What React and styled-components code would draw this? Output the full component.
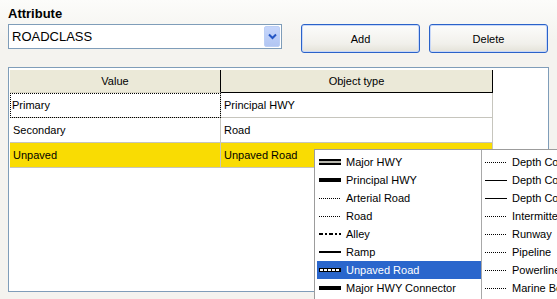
import styled, { createGlobalStyle } from "styled-components";

const GlobalStyle = createGlobalStyle`
  html, body {
    margin: 0;
    padding: 0;
    overflow: hidden;
    background: #f4f3ef;
  }
  * {
    box-sizing: border-box;
  }
`;

const rows = [
  { value: "Primary", type: "Principal HWY", focused: true },
  { value: "Secondary", type: "Road" },
  { value: "Unpaved", type: "Unpaved Road", selected: true },
];

const leftItems = [
  { label: "Major HWY", symbol: "double" },
  { label: "Principal HWY", symbol: "thick" },
  { label: "Arterial Road", symbol: "dotted" },
  { label: "Road", symbol: "dotted" },
  { label: "Alley", symbol: "dashdot" },
  { label: "Ramp", symbol: "solid2" },
  { label: "Unpaved Road", symbol: "unpaved", active: true },
  { label: "Major HWY Connector", symbol: "thick" },
];

const rightItems = [
  { label: "Depth Contour", symbol: "dotted" },
  { label: "Depth Contour 2", symbol: "solid1" },
  { label: "Depth Contour 3", symbol: "solid1" },
  { label: "Intermittent Stream", symbol: "dotted" },
  { label: "Runway", symbol: "dotted" },
  { label: "Pipeline", symbol: "dotted" },
  { label: "Powerline", symbol: "dotted" },
  { label: "Marine Boundary", symbol: "dotted" },
];

function LineSymbol({ kind, light }) {
  const ink = light ? "#ffffff" : "#000000";
  return (
    <svg width="22" height="6" viewBox="0 0 22 6">
      {kind === "double" && (
        <>
          <rect x="0" y="0" width="22" height="6" fill="#000" />
          <rect x="0" y="2" width="22" height="2" fill="#b8b7ae" />
        </>
      )}
      {kind === "thick" && <rect x="0" y="1" width="22" height="4" fill="#000" />}
      {kind === "dotted" && (
        <line x1="0" y1="3.5" x2="22" y2="3.5" stroke={ink} strokeWidth="1" strokeDasharray="1 1" />
      )}
      {kind === "solid1" && <rect x="0" y="3" width="22" height="1" fill={ink} />}
      {kind === "solid2" && <rect x="0" y="2" width="22" height="2" fill={ink} />}
      {kind === "dashdot" && (
        <line x1="0" y1="3" x2="22" y2="3" stroke={ink} strokeWidth="2" strokeDasharray="4 2 2 2" />
      )}
      {kind === "unpaved" && (
        <>
          <rect x="0" y="1" width="22" height="4" fill="#000" />
          <line x1="1" y1="3" x2="21" y2="3" stroke="#fff" strokeWidth="2" strokeDasharray="3 1" />
        </>
      )}
    </svg>
  );
}

function App() {
  return (
    <Page>
      <GlobalStyle />
      <Label>Attribute</Label>
      <Toolbar>
        <Combo>
          <ComboText>ROADCLASS</ComboText>
          <ComboButton>
            <svg width="9" height="7" viewBox="0 0 9 7">
              <path d="M1 1.5 L4.5 5 L8 1.5" fill="none" stroke="#2456c4" strokeWidth="2" />
            </svg>
          </ComboButton>
        </Combo>
        <Button>Add</Button>
        <Button>Delete</Button>
      </Toolbar>
      <GridPanel>
        <HeaderRow>
          <HeaderCell $width={211}>Value</HeaderCell>
          <HeaderCell $width={272} $pressed>
            Object type
          </HeaderCell>
        </HeaderRow>
        {rows.map((r) => (
          <Row key={r.value} $selected={r.selected}>
            <Cell $width={211} $focused={r.focused}>
              {r.value}
            </Cell>
            <Cell $width={272}>{r.type}</Cell>
          </Row>
        ))}
      </GridPanel>
      <Popup>
        <PopupColumn $width={164}>
          {leftItems.map((it) => (
            <MenuItem key={it.label} $active={it.active}>
              <LineSymbol kind={it.symbol} light={it.active} />
              <span>{it.label}</span>
            </MenuItem>
          ))}
        </PopupColumn>
        <Divider />
        <PopupColumn $width={160}>
          {rightItems.map((it) => (
            <MenuItem key={it.label}>
              <LineSymbol kind={it.symbol} />
              <span>{it.label}</span>
            </MenuItem>
          ))}
        </PopupColumn>
      </Popup>
    </Page>
  );
}

export default App;

const Page = styled.div`
  position: relative;
  width: 557px;
  height: 299px;
  padding: 6px 8px 0 8px;
  font-family: "Liberation Sans", Arial, sans-serif;
  font-size: 11px;
  color: #000;
  background: linear-gradient(#fcfcfa, #f4f3ef 40px);
`;

const Label = styled.div`
  font-size: 13px;
  font-weight: bold;
  line-height: 16px;
  height: 18px;
`;

const Toolbar = styled.div`
  display: flex;
  align-items: flex-start;
  gap: 9px;
`;

const Combo = styled.div`
  display: flex;
  align-items: center;
  width: 274px;
  height: 25px;
  margin-right: 10px;
  padding: 0 1px 0 3px;
  border: 1px solid #7f9db9;
  background: #fff;
`;

const ComboText = styled.span`
  flex: 1;
  font-size: 13px;
`;

const ComboButton = styled.div`
  display: flex;
  align-items: center;
  justify-content: center;
  width: 16px;
  height: 21px;
  border: 1px solid #bccff5;
  border-radius: 2px;
  background: linear-gradient(#c6d6fb, #b2c6f3);
`;

const Button = styled.button`
  width: 119px;
  height: 29px;
  padding: 0;
  font-family: inherit;
  font-size: 11px;
  color: #000;
  border: 1px solid #2a62c9;
  border-radius: 3px;
  background: linear-gradient(#fcfcfb, #f1f0eb 70%, #e4e2d8);
  box-shadow: inset 0 0 0 1px #c8d8f8;
`;

const GridPanel = styled.div`
  margin-top: 14px;
  width: 541px;
  height: 225px;
  padding: 2px 0 0 1px;
  border: 1px solid #7f9db9;
  background: #fff;
`;

const HeaderRow = styled.div`
  display: flex;
  height: 23px;
`;

const HeaderCell = styled.div`
  display: flex;
  align-items: center;
  justify-content: center;
  width: ${(p) => p.$width}px;
  background: #ebe9d8;
  border-right: 1px solid #000;
  border-bottom: 1px solid ${(p) => (p.$pressed ? "#000" : "#d8d5c4")};
`;

const Row = styled.div`
  display: flex;
  width: fit-content;
  height: 25px;
  background: ${(p) => (p.$selected ? "#f9dc03" : "#fff")};
`;

const Cell = styled.div`
  display: flex;
  align-items: center;
  width: ${(p) => p.$width}px;
  padding-left: ${(p) => (p.$focused ? 2 : 3)}px;
  border-right: 1px solid #c6c5bd;
  border-bottom: 1px solid #c6c5bd;
  outline: ${(p) => (p.$focused ? "1px dotted #000" : "none")};
  outline-offset: -1px;
`;

const Popup = styled.div`
  position: absolute;
  left: 314px;
  top: 149px;
  display: flex;
  padding: 3px 0 0 2px;
  height: 160px;
  border: 1px solid #9c9c9c;
  background: #fff;
`;

const PopupColumn = styled.div`
  display: flex;
  flex-direction: column;
  width: ${(p) => p.$width}px;
`;

const Divider = styled.div`
  width: 1px;
  margin: -3px 1px 0 0;
  background: #a8a8a8;
`;

const MenuItem = styled.div`
  display: flex;
  align-items: center;
  gap: 5px;
  height: 18px;
  padding-left: 2px;
  white-space: nowrap;
  color: ${(p) => (p.$active ? "#fff" : "#000")};
  background: ${(p) => (p.$active ? "#2a66cc" : "transparent")};
`;
